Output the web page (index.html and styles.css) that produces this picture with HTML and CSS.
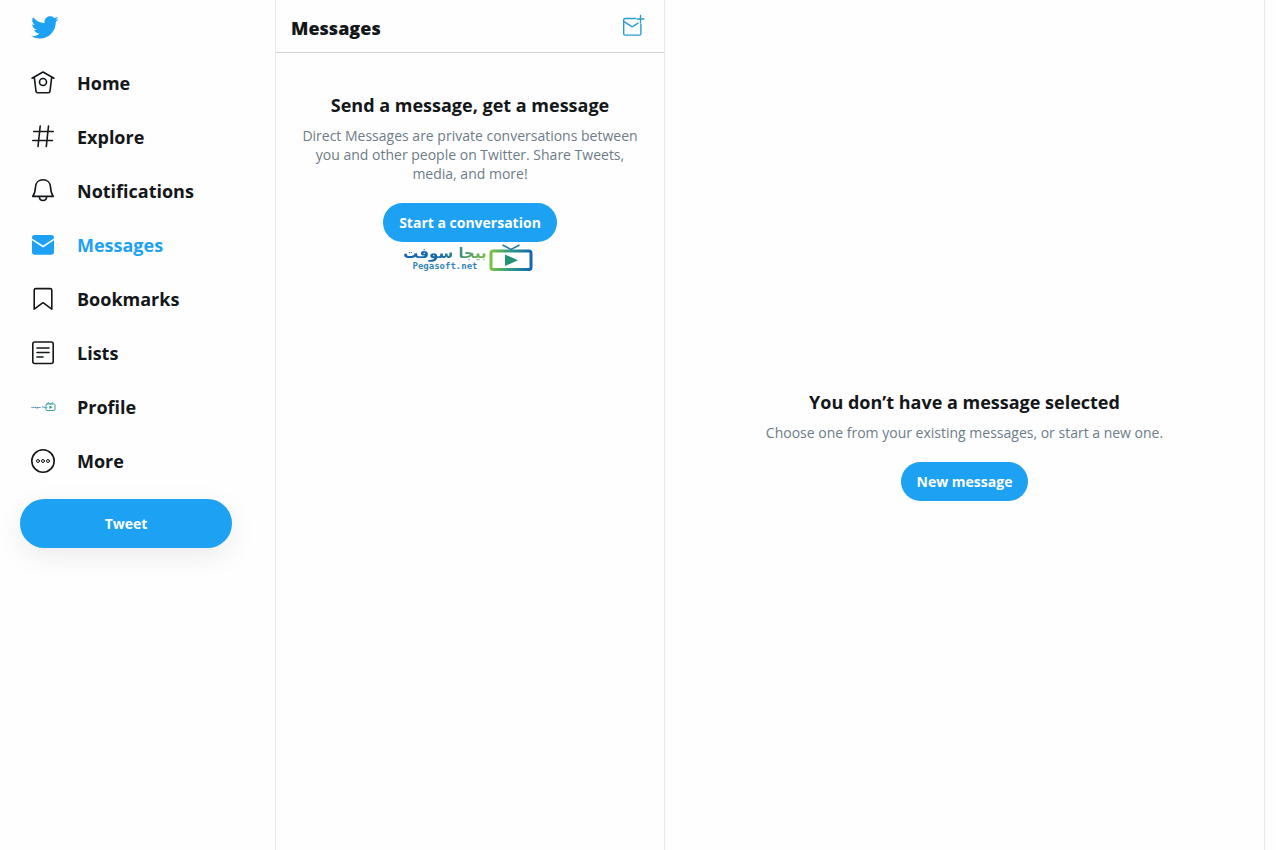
FILE: index.html
```
<!DOCTYPE html>
<html lang="en">

<head>
    <meta charset="UTF-8">
    <meta name="viewport" content="width=device-width, initial-scale=1.0">
    <title>Messages / Twitter</title>
    <link rel="stylesheet" href="styles.css">
</head>

<body>

    <header class="sidebar">
        <a class="logo" href="#" aria-label="Twitter">
            <svg viewBox="0 0 24 24"><path d="M23.643 4.937c-.835.37-1.732.62-2.675.733.962-.576 1.7-1.49 2.048-2.578-.9.534-1.897.922-2.958 1.13-.85-.904-2.06-1.47-3.4-1.47-2.572 0-4.658 2.086-4.658 4.66 0 .364.042.718.12 1.06-3.873-.195-7.304-2.05-9.602-4.868-.4.69-.63 1.49-.63 2.342 0 1.616.823 3.043 2.072 3.878-.764-.025-1.482-.234-2.11-.583v.06c0 2.257 1.605 4.14 3.737 4.568-.392.106-.803.162-1.227.162-.3 0-.593-.028-.877-.082.593 1.85 2.313 3.198 4.352 3.234-1.595 1.25-3.604 1.995-5.786 1.995-.376 0-.747-.022-1.112-.065 2.062 1.323 4.51 2.093 7.14 2.093 8.57 0 13.255-7.098 13.255-13.254 0-.2-.005-.402-.014-.602.91-.658 1.7-1.477 2.323-2.41z"/></svg>
        </a>

        <nav class="menu">
            <a class="menu-item" href="#">
                <svg class="icon" viewBox="0 0 26 26"><path d="M2 8.200 13 2l11 6.200M4.300 7.400l1.700 13.700c.1 1 .8 1.600 1.800 1.600h10.400c1 0 1.700-.6 1.800-1.600l1.700-13.700"/><circle cx="13" cy="12" r="3.500"/></svg>
                <span>Home</span>
            </a>
            <a class="menu-item" href="#">
                <svg class="icon" viewBox="0 0 26 26"><path d="M10.200 2 8 22.500M18.500 2l-2.200 20.500M3.700 7.500h19.600M2.800 16.500h19.600"/></svg>
                <span>Explore</span>
            </a>
            <a class="menu-item" href="#">
                <svg class="icon" viewBox="0 0 26 26"><path d="M13 1.800c-4.300 0-7.300 3-7.500 7.200-.2 4.500-.8 6.700-2.800 9.400h20.600c-2-2.700-2.600-4.900-2.800-9.400-.2-4.200-3.200-7.200-7.500-7.200zM9.300 18.600c.2 2.400 1.700 3.900 3.700 3.900s3.500-1.500 3.700-3.900"/></svg>
                <span>Notifications</span>
            </a>
            <a class="menu-item active" href="#">
                <svg class="icon filled" viewBox="0 0 26 26"><path d="M2 5.600c0-1.500 1-2.600 2.500-2.600h17c1.500 0 2.500 1.100 2.500 2.600v.8l-11 7.200L2 6.400z"/><path d="M2 8.300l10.200 6.700c.5.300 1.100.3 1.600 0L24 8.300v11.600c0 1.700-1 2.800-2.500 2.800h-17C3 22.700 2 21.600 2 19.900z"/></svg>
                <span>Messages</span>
            </a>
            <a class="menu-item" href="#">
                <svg class="icon" viewBox="0 0 26 26"><path d="M4.200 23.200V4.200c0-1 .6-1.600 1.600-1.600h14.400c1 0 1.600.6 1.600 1.600v19L13 16.700z"/></svg>
                <span>Bookmarks</span>
            </a>
            <a class="menu-item" href="#">
                <svg class="icon" viewBox="0 0 26 26"><rect x="2.800" y="2" width="20.400" height="21.500" rx="2"/><path d="M7 8h12M7 12.500h12M7 17h6"/></svg>
                <span>Lists</span>
            </a>
            <a class="menu-item" href="#">
                <svg class="icon" viewBox="0 0 26 26">
                    <text class="tiny-brand" x="1" y="14">بيجا سوفت</text>
                    <g class="tiny-tv"><rect x="16" y="10" width="9" height="6.500" rx="1"/><path d="m18 8.500 2.500 1.500L23 8.500"/></g>
                    <path class="tiny-play" d="m19.500 11.500 3 1.800-3 1.800z"/>
                </svg>
                <span>Profile</span>
            </a>
            <a class="menu-item" href="#">
                <svg class="icon" viewBox="0 0 26 26"><circle cx="13" cy="13" r="11.200"/><g class="dots"><circle cx="8" cy="13" r="1.500"/><circle cx="13" cy="13" r="1.500"/><circle cx="18" cy="13" r="1.500"/></g></svg>
                <span>More</span>
            </a>
        </nav>

        <button class="btn tweet">Tweet</button>
    </header>

    <section class="inbox">
        <div class="inbox-header">
            <h1>Messages</h1>
            <button class="compose" aria-label="New message">
                <svg viewBox="0 0 24 24"><path d="M14.500 4.500H4c-.8 0-1.300.5-1.300 1.300v14c0 .8.500 1.300 1.300 1.300h14.600c.8 0 1.300-.5 1.300-1.300V10M3 7.700l7.500 4.700c.5.300 1 .3 1.500 0l5-3.200M19.500 1.500v7M16 5h7"/></svg>
            </button>
        </div>
        <div class="empty">
            <h2>Send a message, get a message</h2>
            <p>Direct Messages are private conversations between you and other people on Twitter. Share Tweets, media, and more!</p>
            <button class="btn">Start a conversation</button>
            <div class="brand">
                <div class="brand-name">
                    <span class="brand-ar" lang="ar">بيجا سوفت</span>
                    <span class="brand-en">Pegasoft.net</span>
                </div>
                <svg class="brand-tv" viewBox="0 0 44 28">
                    <defs>
                        <linearGradient id="tv" x1="0" x2="1" y1="0" y2="0">
                            <stop offset="0" stop-color="#7cc142"/>
                            <stop offset=".5" stop-color="#2a9a84"/>
                            <stop offset="1" stop-color="#1268b0"/>
                        </linearGradient>
                    </defs>
                    <rect x="2" y="7" width="40" height="18.500" rx="2" fill="none" stroke="url(#tv)" stroke-width="3"/>
                    <path d="m13.500 1 8.500 4.500L30.500 1" fill="none" stroke="#2479a8" stroke-width="1.500"/>
                    <path d="m16 10.500 13 5.800-13 5.800z" fill="#239078"/>
                </svg>
            </div>
        </div>
    </section>

    <main class="conversation">
        <div class="empty">
            <h2>You don’t have a message selected</h2>
            <p>Choose one from your existing messages, or start a new one.</p>
            <button class="btn">New message</button>
        </div>
    </main>

</body>

</html>
```
FILE: styles.css
```
* {
    box-sizing: border-box;
}

body {
    font-family: "Segoe UI", "Open Sans", "Noto Sans", sans-serif;
    font-size: 14px;
    color: #14171a;
    background-color: #fefefe;
    margin: 0;
    min-height: 100vh;
    display: flex;
}

h1,
h2,
p {
    margin: 0;
}

button {
    font-family: inherit;
    border: none;
    cursor: pointer;
}

/* Sidebar */
.sidebar {
    flex: 0 0 276px;
    padding: 0 43px 0 20px;
    border-right: 1px solid #e6e9eb;
}

.logo {
    display: block;
    height: 56px;
    padding: 13px 10px;
}

.logo svg {
    display: block;
    width: 29px;
    height: 29px;
    fill: #1da1f2;
}

.menu-item {
    display: flex;
    align-items: center;
    gap: 21px;
    height: 54px;
    padding-left: 10px;
    color: #14171a;
    font-size: 18px;
    font-weight: 700;
    text-decoration: none;
}

.menu-item.active {
    color: #1da1f2;
}

.icon {
    width: 26px;
    height: 26px;
    fill: none;
    stroke: currentColor;
    stroke-width: 1.6;
    stroke-linecap: round;
    stroke-linejoin: round;
}

.icon.filled {
    fill: currentColor;
    stroke: none;
}

.dots {
    stroke-width: 1;
}

.tiny-brand {
    font-family: "DejaVu Sans", sans-serif;
    font-size: 3px;
    font-weight: 700;
    fill: #2479a8;
    stroke: none;
}

.tiny-tv {
    stroke: #3d9f9a;
    stroke-width: 1;
}

.tiny-play {
    fill: #2a9a84;
    stroke: none;
}

/* Buttons */
.btn {
    height: 39px;
    padding: 0 16px;
    border-radius: 25px;
    background-color: #1da1f2;
    color: #ffffff;
    font-size: 14px;
    font-weight: 700;
}

.tweet {
    width: 100%;
    height: 49px;
    margin-top: 11px;
    box-shadow: 0 8px 28px rgba(0, 0, 0, 0.08);
}

/* Message list */
.inbox {
    flex: 0 0 389px;
    border-right: 1px solid #e6e9eb;
}

.inbox-header {
    display: flex;
    align-items: center;
    justify-content: space-between;
    height: 53px;
    padding: 0 19px 0 15px;
    border-bottom: 1px solid #ccd3d6;
}

.inbox-header h1 {
    padding-top: 4px;
    font-size: 18px;
    font-weight: 800;
}

.compose {
    padding: 0;
    background: none;
}

.compose svg {
    display: block;
    width: 24px;
    height: 24px;
    fill: none;
    stroke: #2b9cd0;
    stroke-width: 1.4;
    stroke-linecap: round;
    stroke-linejoin: round;
}

.empty {
    text-align: center;
}

.empty h2 {
    margin-bottom: 8px;
    font-size: 18px;
    line-height: 25px;
}

.empty p {
    margin-bottom: 20px;
    color: #6d7c88;
    line-height: 19px;
}

.inbox .empty {
    padding: 40px 20px;
}

/* Pegasoft logo */
.brand {
    display: flex;
    justify-content: center;
    gap: 2px;
    margin-top: 2px;
    padding-right: 4px;
}

.brand-name {
    display: flex;
    flex-direction: column;
    align-items: center;
}

.brand-ar {
    font-family: "DejaVu Sans", sans-serif;
    font-size: 15px;
    font-weight: 700;
    line-height: 18px;
    color: transparent;
    background: linear-gradient(90deg, #1268b0, #1268b0 40%, #7cc142);
    -webkit-background-clip: text;
    background-clip: text;
}

.brand-en {
    font-family: "DejaVu Sans Mono", monospace;
    font-size: 9px;
    font-weight: 700;
    line-height: 8px;
    color: #3587b5;
}

.brand-tv {
    width: 44px;
    height: 28px;
}

/* Conversation pane */
.conversation {
    flex: 1;
    max-width: 600px;
    display: flex;
    align-items: center;
    justify-content: center;
    padding: 40px 20px 0;
    border-right: 1px solid #e6e9eb;
}
```
